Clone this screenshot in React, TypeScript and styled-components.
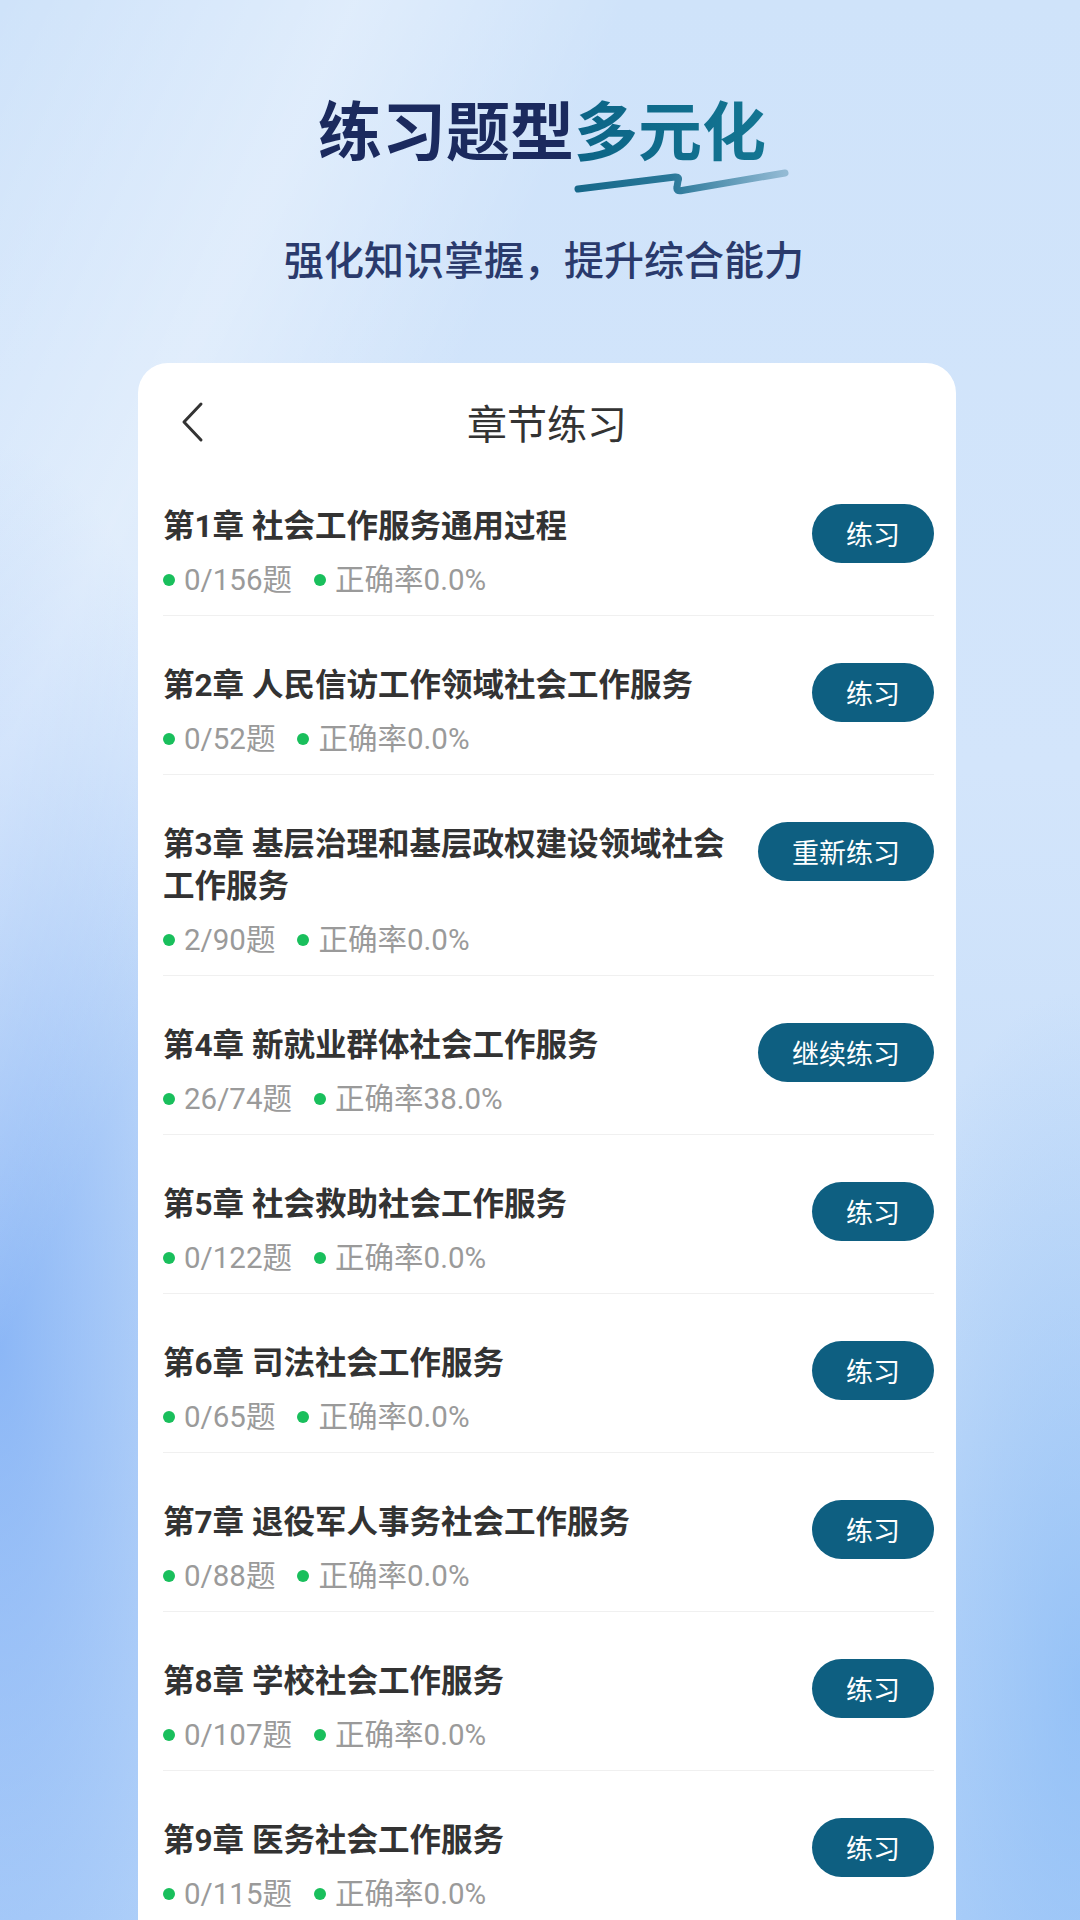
import React from "react";
import styled, { createGlobalStyle } from "styled-components";

type Chapter = {
	no: number;
	name: string;
	done: number;
	total: number;
	rate: string;
	action: string;
};

const chapters: Chapter[] = [
	{ no: 1, name: "社会工作服务通用过程", done: 0, total: 156, rate: "0.0%", action: "练习" },
	{ no: 2, name: "人民信访工作领域社会工作服务", done: 0, total: 52, rate: "0.0%", action: "练习" },
	{ no: 3, name: "基层治理和基层政权建设领域社会工作服务", done: 2, total: 90, rate: "0.0%", action: "重新练习" },
	{ no: 4, name: "新就业群体社会工作服务", done: 26, total: 74, rate: "38.0%", action: "继续练习" },
	{ no: 5, name: "社会救助社会工作服务", done: 0, total: 122, rate: "0.0%", action: "练习" },
	{ no: 6, name: "司法社会工作服务", done: 0, total: 65, rate: "0.0%", action: "练习" },
	{ no: 7, name: "退役军人事务社会工作服务", done: 0, total: 88, rate: "0.0%", action: "练习" },
	{ no: 8, name: "学校社会工作服务", done: 0, total: 107, rate: "0.0%", action: "练习" },
	{ no: 9, name: "医务社会工作服务", done: 0, total: 115, rate: "0.0%", action: "练习" },
];

const App: React.FC = () => {
	return (
		<Page>
			<GlobalStyle />
			<Hero>
				<HeroTitle>
					练习题型<Accent>多元化</Accent>
				</HeroTitle>
				<Squiggle>
					<svg width="220" height="32" viewBox="0 0 220 32">
						<defs>
							<linearGradient id="sq" x1="0" y1="0" x2="1" y2="0">
								<stop offset="0" stopColor="#16688a" />
								<stop offset="0.45" stopColor="#2a7899" />
								<stop offset="1" stopColor="#93bad4" />
							</linearGradient>
						</defs>
						<path
							d="M6 24 L103 12 Q108 11.5 106 16 L105 22 Q104 27 110 25.5 L213 8"
							fill="none"
							stroke="url(#sq)"
							strokeWidth="7"
							strokeLinecap="round"
							strokeLinejoin="round"
						/>
					</svg>
				</Squiggle>
				<HeroSub>强化知识掌握，提升综合能力</HeroSub>
			</Hero>

			<Card>
				<CardHeader>
					<BackButton aria-label="返回">
						<svg width="26" height="42" viewBox="0 0 26 42">
							<path
								d="M21 3 L4 21 L21 39"
								fill="none"
								stroke="#333"
								strokeWidth="3"
								strokeLinecap="round"
								strokeLinejoin="round"
							/>
						</svg>
					</BackButton>
					<HeaderTitle>章节练习</HeaderTitle>
				</CardHeader>

				<List>
					{chapters.map((c) => (
						<Row key={c.no}>
							<Info>
								<ChapterName>
									第{c.no}章 {c.name}
								</ChapterName>
								<Stats>
									<Stat>
										<Dot />
										{c.done}/{c.total}题
									</Stat>
									<Stat>
										<Dot />
										正确率{c.rate}
									</Stat>
								</Stats>
							</Info>
							<PracticeButton>{c.action}</PracticeButton>
						</Row>
					))}
				</List>
			</Card>
		</Page>
	);
};

export default App;

const GlobalStyle = createGlobalStyle`
	html, body {
		margin: 0;
		padding: 0;
	}
	body {
		font-family: "Roboto", "Noto Sans CJK SC", "Noto Sans", sans-serif;
		-webkit-font-smoothing: antialiased;
	}
	* {
		box-sizing: border-box;
	}
`;

const Page = styled.div`
	width: 1080px;
	height: 1920px;
	overflow: hidden;
	padding-top: 95px;
	background:
		linear-gradient(115deg, rgba(255, 255, 255, 0) 0%, rgba(255, 255, 255, 0.35) 18%, rgba(255, 255, 255, 0) 32%),
		radial-gradient(ellipse 260px 900px at 0% 70%, rgba(120, 170, 245, 0.75), rgba(120, 170, 245, 0) 100%),
		radial-gradient(ellipse 240px 700px at 100% 88%, rgba(125, 180, 245, 0.6), rgba(125, 180, 245, 0) 100%),
		linear-gradient(180deg, #cfe3fa 0%, #d3e5fb 40%, #c4dcf9 75%, #b4d3f9 100%);
`;

const Hero = styled.header`
	display: flex;
	flex-direction: column;
	align-items: center;
`;

const HeroTitle = styled.h1`
	margin: 0;
	padding-left: 4px;
	font-family: "Noto Sans CJK SC", sans-serif;
	font-size: 64px;
	line-height: 64px;
	font-weight: 700;
	color: #1b2a5e;
	letter-spacing: 0;
`;

const Accent = styled.span`
	background: linear-gradient(90deg, #0c6486 0%, #137592 100%);
	-webkit-background-clip: text;
	background-clip: text;
	color: transparent;
`;

const Squiggle = styled.div`
	align-self: flex-start;
	margin: 6px 0 0 572px;
	height: 32px;
	svg {
		display: block;
	}
`;

const HeroSub = styled.p`
	margin: 41px 0 0;
	padding-left: 8px;
	font-family: "Noto Sans CJK SC", sans-serif;
	font-size: 40px;
	line-height: 41px;
	font-weight: 500;
	letter-spacing: 0;
	color: #2a3a6c;
`;

const Card = styled.main`
	margin: 84px 124px 0 138px;
	background: #fff;
	border-radius: 30px 30px 0 0;
	min-height: 1600px;
`;

const CardHeader = styled.div`
	position: relative;
	display: flex;
	justify-content: center;
	align-items: center;
	padding: 38px 0 14px;
`;

const BackButton = styled.button`
	position: absolute;
	left: 42px;
	top: 38px;
	padding: 0;
	border: 0;
	background: none;
	svg {
		display: block;
	}
`;

const HeaderTitle = styled.h2`
	margin: 0;
	font-family: "Noto Sans CJK SC", sans-serif;
	font-size: 40px;
	line-height: 42px;
	font-weight: 400;
	color: #333;
`;

const List = styled.ul`
	margin: 0;
	padding: 0;
	list-style: none;
`;

const Row = styled.li`
	display: flex;
	align-items: flex-start;
	margin: 0 22px 0 25px;
	padding: 49px 0 17px;
	border-bottom: 1px solid #f0f0f0;
`;

const Info = styled.div`
	flex: 1;
	min-width: 0;
	padding-right: 16px;
`;

const ChapterName = styled.div`
	font-size: 31.5px;
	line-height: 42px;
	font-weight: 700;
	color: #333;
`;

const Stats = styled.div`
	display: flex;
	gap: 22px;
	margin-top: 14px;
`;

const Stat = styled.span`
	display: flex;
	align-items: center;
	gap: 9px;
	font-size: 29.5px;
	line-height: 36px;
	color: #9a9a9a;
`;

const Dot = styled.i`
	width: 12px;
	height: 12px;
	border-radius: 50%;
	background: #19bf5c;
`;

const PracticeButton = styled.button`
	flex-shrink: 0;
	margin-top: -2px;
	height: 59px;
	padding: 0 34px;
	border: 0;
	border-radius: 30px;
	background: #0e5f81;
	color: #fff;
	font-family: "Noto Sans CJK SC", sans-serif;
	font-size: 27px;
	line-height: 59px;
	font-weight: 400;
`;
